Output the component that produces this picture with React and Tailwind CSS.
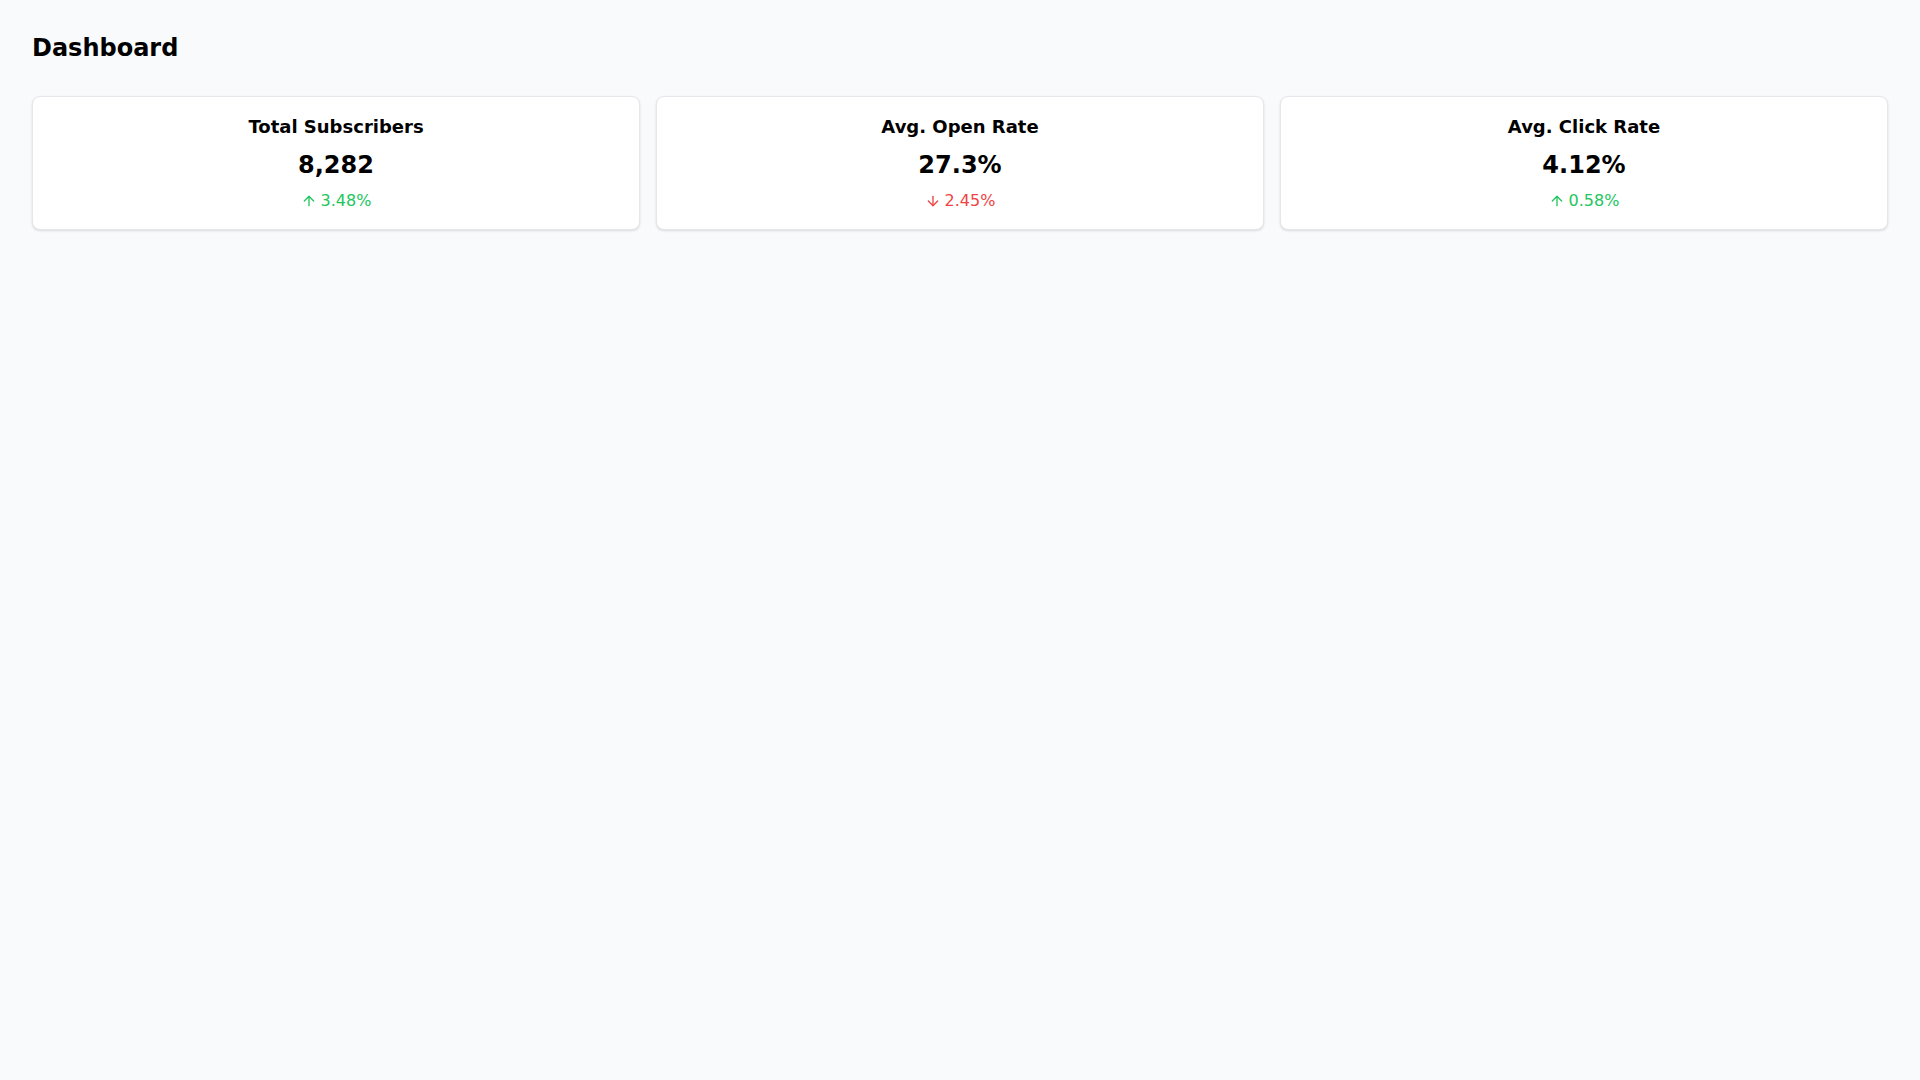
import React from 'react';
import { ArrowUp, ArrowDown } from 'lucide-react';

const STATS = [
  { label: 'Total Subscribers', value: '8,282', change: '3.48%', up: true },
  { label: 'Avg. Open Rate', value: '27.3%', change: '2.45%', up: false },
  { label: 'Avg. Click Rate', value: '4.12%', change: '0.58%', up: true },
];

function StatCard({ label, value, change, up }) {
  const Icon = up ? ArrowUp : ArrowDown;
  return (
    <div className="bg-white border border-gray-200 rounded-lg shadow-sm p-4 text-center">
      <p className="text-lg font-bold text-black">{label}</p>
      <p className="mt-2 text-2xl font-bold text-black">{value}</p>
      <p className={`mt-2 text-base flex items-center justify-center gap-1 ${up ? 'text-[#22c55e]' : 'text-[#ef4444]'}`}>
        <Icon size={16} strokeWidth={2} />
        <span>{change}</span>
      </p>
    </div>
  );
}

export default function App() {
  return (
    <div
      className="min-h-screen bg-gray-50 p-8"
      style={{ fontFamily: '"DejaVu Sans", sans-serif' }}
    >
      <h1 className="text-2xl font-bold text-black mb-8">Dashboard</h1>
      <div className="grid grid-cols-3 gap-4">
        {STATS.map(s => (
          <StatCard key={s.label} {...s} />
        ))}
      </div>
    </div>
  );
}
